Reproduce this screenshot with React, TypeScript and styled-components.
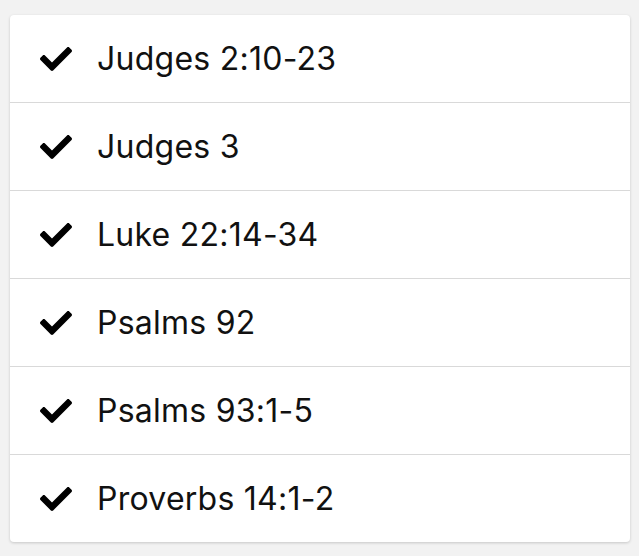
import React from "react";
import styled, { createGlobalStyle } from "styled-components";
import { FaCheck } from "react-icons/fa";

const Global = createGlobalStyle`
  html, body { margin: 0; padding: 0; background: #f2f2f2; }
  body { font-family: Inter, "Liberation Sans", sans-serif; }
`;

const Page = styled.div`
  padding: 15px 9px 14px 10px;
`;

const Card = styled.ul`
  list-style: none;
  margin: 0;
  padding: 0;
  background: #fff;
  border-radius: 4px;
  box-shadow: 0 1px 3px rgba(0, 0, 0, 0.18);
  overflow: hidden;
`;

const Row = styled.li`
  display: flex;
  align-items: center;
  height: 87px;
  padding-left: 30px;
  border-bottom: 1px solid #d9d9d9;
  &:last-child { border-bottom: none; }
`;

const Check = styled.span`
  display: flex;
  width: 32px;
  height: 32px;
  align-items: center;
  justify-content: center;
  color: #000;
  margin-right: 25px;
`;

const Label = styled.span`
  font-size: 32px;
  color: #111;
  letter-spacing: 0.25px;
`;

const items = [
  "Judges 2:10-23",
  "Judges 3",
  "Luke 22:14-34",
  "Psalms 92",
  "Psalms 93:1-5",
  "Proverbs 14:1-2",
];

export default function App() {
  return (
    <>
      <Global />
      <Page>
        <Card>
          {items.map((t) => (
            <Row key={t}>
              <Check>
                <FaCheck size={32} />
              </Check>
              <Label>{t}</Label>
            </Row>
          ))}
        </Card>
      </Page>
    </>
  );
}
